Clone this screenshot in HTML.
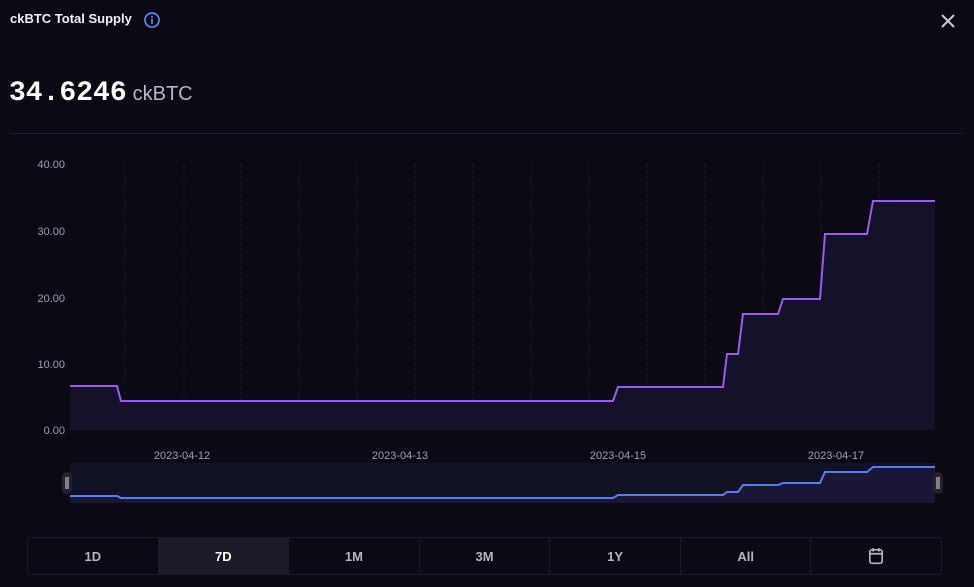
<!DOCTYPE html>
<html><head><style>
body{margin:0;width:974px;height:587px;background:#0b0a14;font-family:"Liberation Sans",sans-serif;overflow:hidden;position:relative;color:#fff}
.t{position:absolute;left:10px;top:11px;font-size:13px;font-weight:bold;color:#f0f0f5}
.v{position:absolute;left:9px;top:78px;font-family:"Liberation Mono",monospace;font-size:28px;font-weight:bold;color:#fff;white-space:nowrap}
.u{font-family:"Liberation Sans",sans-serif;font-size:20px;font-weight:normal;color:#b8b6c4;margin-left:6px}
.hr{position:absolute;left:10px;right:10px;top:133px;height:1px;background:#1a1930}
.btns{position:absolute;left:27px;top:537px;width:915px;height:38px;display:flex;border:1px solid #1a1a2e;box-sizing:border-box}
.btns div{flex:1;border-right:1px solid #1a1a2e;display:flex;align-items:center;justify-content:center;font-size:13px;font-weight:bold;color:#b5b4c0}
.btns div:last-child{border-right:none}
.btns .a{background:#1b1a28;color:#fff}
</style></head><body>
<div class="t">ckBTC Total Supply</div>
<svg style="position:absolute;left:143px;top:11px" width="18" height="18" viewBox="0 0 18 18"><circle cx="9" cy="9" r="7" fill="none" stroke="#5a7ef0" stroke-width="1.8"/><rect x="8.1" y="8" width="1.8" height="5" fill="#5a7ef0"/><rect x="8.1" y="5" width="1.8" height="1.8" fill="#5a7ef0"/></svg>
<svg style="position:absolute;left:940px;top:13px" width="16" height="16"><path d="M2 2L14 14M14 2L2 14" stroke="#c8c8d0" stroke-width="2"/></svg>
<div class="v">34.6246<span class="u">ckBTC</span></div>
<div class="hr"></div>
<svg style="position:absolute;left:0;top:0" width="974" height="587">
<g stroke="#1c1b2a" stroke-dasharray="3,3">
<line x1="125" y1="164" x2="125" y2="430"/><line x1="184" y1="164" x2="184" y2="430"/><line x1="241" y1="164" x2="241" y2="430"/><line x1="299" y1="164" x2="299" y2="430"/><line x1="357" y1="164" x2="357" y2="430"/><line x1="415" y1="164" x2="415" y2="430"/><line x1="473" y1="164" x2="473" y2="430"/><line x1="531" y1="164" x2="531" y2="430"/><line x1="589" y1="164" x2="589" y2="430"/><line x1="647" y1="164" x2="647" y2="430"/><line x1="705" y1="164" x2="705" y2="430"/><line x1="763" y1="164" x2="763" y2="430"/><line x1="821" y1="164" x2="821" y2="430"/><line x1="879" y1="164" x2="879" y2="430"/>
</g>
<g font-size="11" fill="#a09eb0" text-anchor="end">
<text x="65" y="168">40.00</text><text x="65" y="235">30.00</text><text x="65" y="302">20.00</text><text x="65" y="368">10.00</text><text x="65" y="434">0.00</text>
</g>
<path d="M70 386H117L121 401H613L618 387H723L727 354H738L743 314H778L783 299H820L825 234H867L873 201H935V430H70Z" fill="#16112a"/>
<path d="M70 386H117L121 401H613L618 387H723L727 354H738L743 314H778L783 299H820L825 234H867L873 201H935" fill="none" stroke="#9a5cf0" stroke-width="2"/>
<g font-size="11" fill="#a09eb0" text-anchor="middle">
<text x="182" y="459">2023-04-12</text><text x="400" y="459">2023-04-13</text><text x="618" y="459">2023-04-15</text><text x="836" y="459">2023-04-17</text>
</g>
<rect x="70" y="463" width="865" height="40" fill="#121226"/>
<path d="M70 496H117L121 498H613L618 495H723L727 492H738L743 485H778L783 483H820L825 472H867L873 467H935V503H70Z" fill="#1a1636"/>
<path d="M70 496H117L121 498H613L618 495H723L727 492H738L743 485H778L783 483H820L825 472H867L873 467H935" fill="none" stroke="#5a7ef0" stroke-width="2"/>
<rect x="62" y="472" width="10" height="22" rx="5" fill="#222230"/><path d="M66 477v12M68 477v12" stroke="#ddd" stroke-width="1"/>
<rect x="933" y="472" width="10" height="22" rx="5" fill="#222230"/><path d="M937 477v12M939 477v12" stroke="#ddd" stroke-width="1"/>
</svg>
<div class="btns"><div>1D</div><div class="a">7D</div><div>1M</div><div>3M</div><div>1Y</div><div>All</div><div><svg width="16" height="18" viewBox="0 0 14 16"><rect x="1.5" y="2.5" width="11" height="12" rx="2" fill="none" stroke="#b5b4c0" stroke-width="1.5"/><path d="M1.5 6h11M4.5 1v3M9.5 1v3" stroke="#b5b4c0" stroke-width="1.5"/></svg></div></div>
</body></html>
